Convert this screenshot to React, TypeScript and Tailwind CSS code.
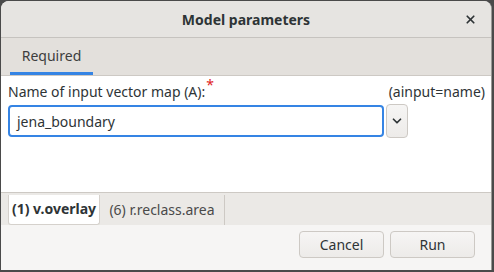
import { ChevronDown, X } from "lucide-react";

export default function App() {
  return (
    <div
      className="w-[494px] h-[272px] bg-[#4a4a4a] pt-px pl-px pr-[2px] pb-[2px] text-[#2e3436]"
      style={{ fontFamily: '"Noto Sans", "Open Sans", sans-serif' }}
    >
      <div className="flex flex-col h-full rounded-t-[8px] overflow-hidden bg-[#f6f5f4] border-r border-[#9a9996]">
        {/* header bar */}
        <div className="relative h-[37px] shrink-0 flex items-center justify-center bg-[#e6e4e1] border-b border-[#c6c3bf]">
          <span className="text-[14px] font-bold text-[#2e3436]">Model parameters</span>
          <X className="absolute right-[14px] top-[12px] w-[13px] h-[13px]" strokeWidth={3.2} color="#2e3436" />
        </div>

        {/* top tabs */}
        <div className="h-[38px] shrink-0 flex items-end bg-[#e3e0dc] border-b border-[#cdc9c4] pl-[9px]">
          <div className="w-[83px] h-full flex flex-col">
            <div className="flex-1 flex items-center justify-center text-[14px] text-[#3d3d3d] pt-[1px]">
              Required
            </div>
            <div className="h-[3px] bg-[#3584e4]" />
          </div>
        </div>

        {/* content */}
        <div className="h-[117px] shrink-0 bg-white border-b border-[#cdc9c4] px-[7px] pt-[6px]">
          <div className="flex items-center justify-between h-[20px] leading-[20px] text-[14px] text-[#2e3436]">
            <span className="relative">
              Name of input vector map (A):
              <span className="absolute -top-[7px] left-full ml-[1px] text-[#e01b24]">*</span>
            </span>
            <span className="mr-[-1px]">(ainput=name)</span>
          </div>
          <div className="flex items-center mt-[2px]">
            <div className="w-[376px] h-[32px] rounded-[4px] border-2 border-[#3584e4] flex items-center pl-[7px] text-[14px] text-[#2e3436]">
              jena_boundary
            </div>
            <div className="ml-[2px] w-[22px] h-[34px] rounded-[4px] border border-[#cdc9c4] bg-gradient-to-b from-[#f6f5f4] to-[#edebe9] flex items-center justify-center">
              <ChevronDown className="w-[14px] h-[14px]" strokeWidth={3} color="#2e3436" />
            </div>
          </div>
        </div>

        {/* bottom tabs */}
        <div className="h-[32px] shrink-0 flex items-stretch bg-[#ebe9e6] pl-[7px] pt-[2px]">
          <div className="w-[92px] bg-white rounded-b-[3px] border border-t-0 border-[#d5d1cc] flex items-center justify-center text-[14px] font-bold text-[#2e3436] pb-[2px]">
            (1) v.overlay
          </div>
          <div className="w-[125px] flex items-center justify-center text-[14px] text-[#4a4a4a] border-r border-[#cdc9c4] pb-[2px]">
            (6) r.reclass.area
          </div>
        </div>

        {/* buttons */}
        <div className="flex-1 flex justify-end items-start gap-[6px] pr-[16px] pt-[6px] bg-[#f6f5f4]">
          <button className="w-[85px] h-[27px] rounded-[4px] border border-[#cdc9c4] bg-gradient-to-b from-[#f6f5f4] to-[#edebe9] text-[14px] text-[#2e3436]">
            Cancel
          </button>
          <button className="w-[85px] h-[27px] rounded-[4px] border border-[#cdc9c4] bg-gradient-to-b from-[#f6f5f4] to-[#edebe9] text-[14px] text-[#2e3436]">
            Run
          </button>
        </div>
      </div>
    </div>
  );
}
